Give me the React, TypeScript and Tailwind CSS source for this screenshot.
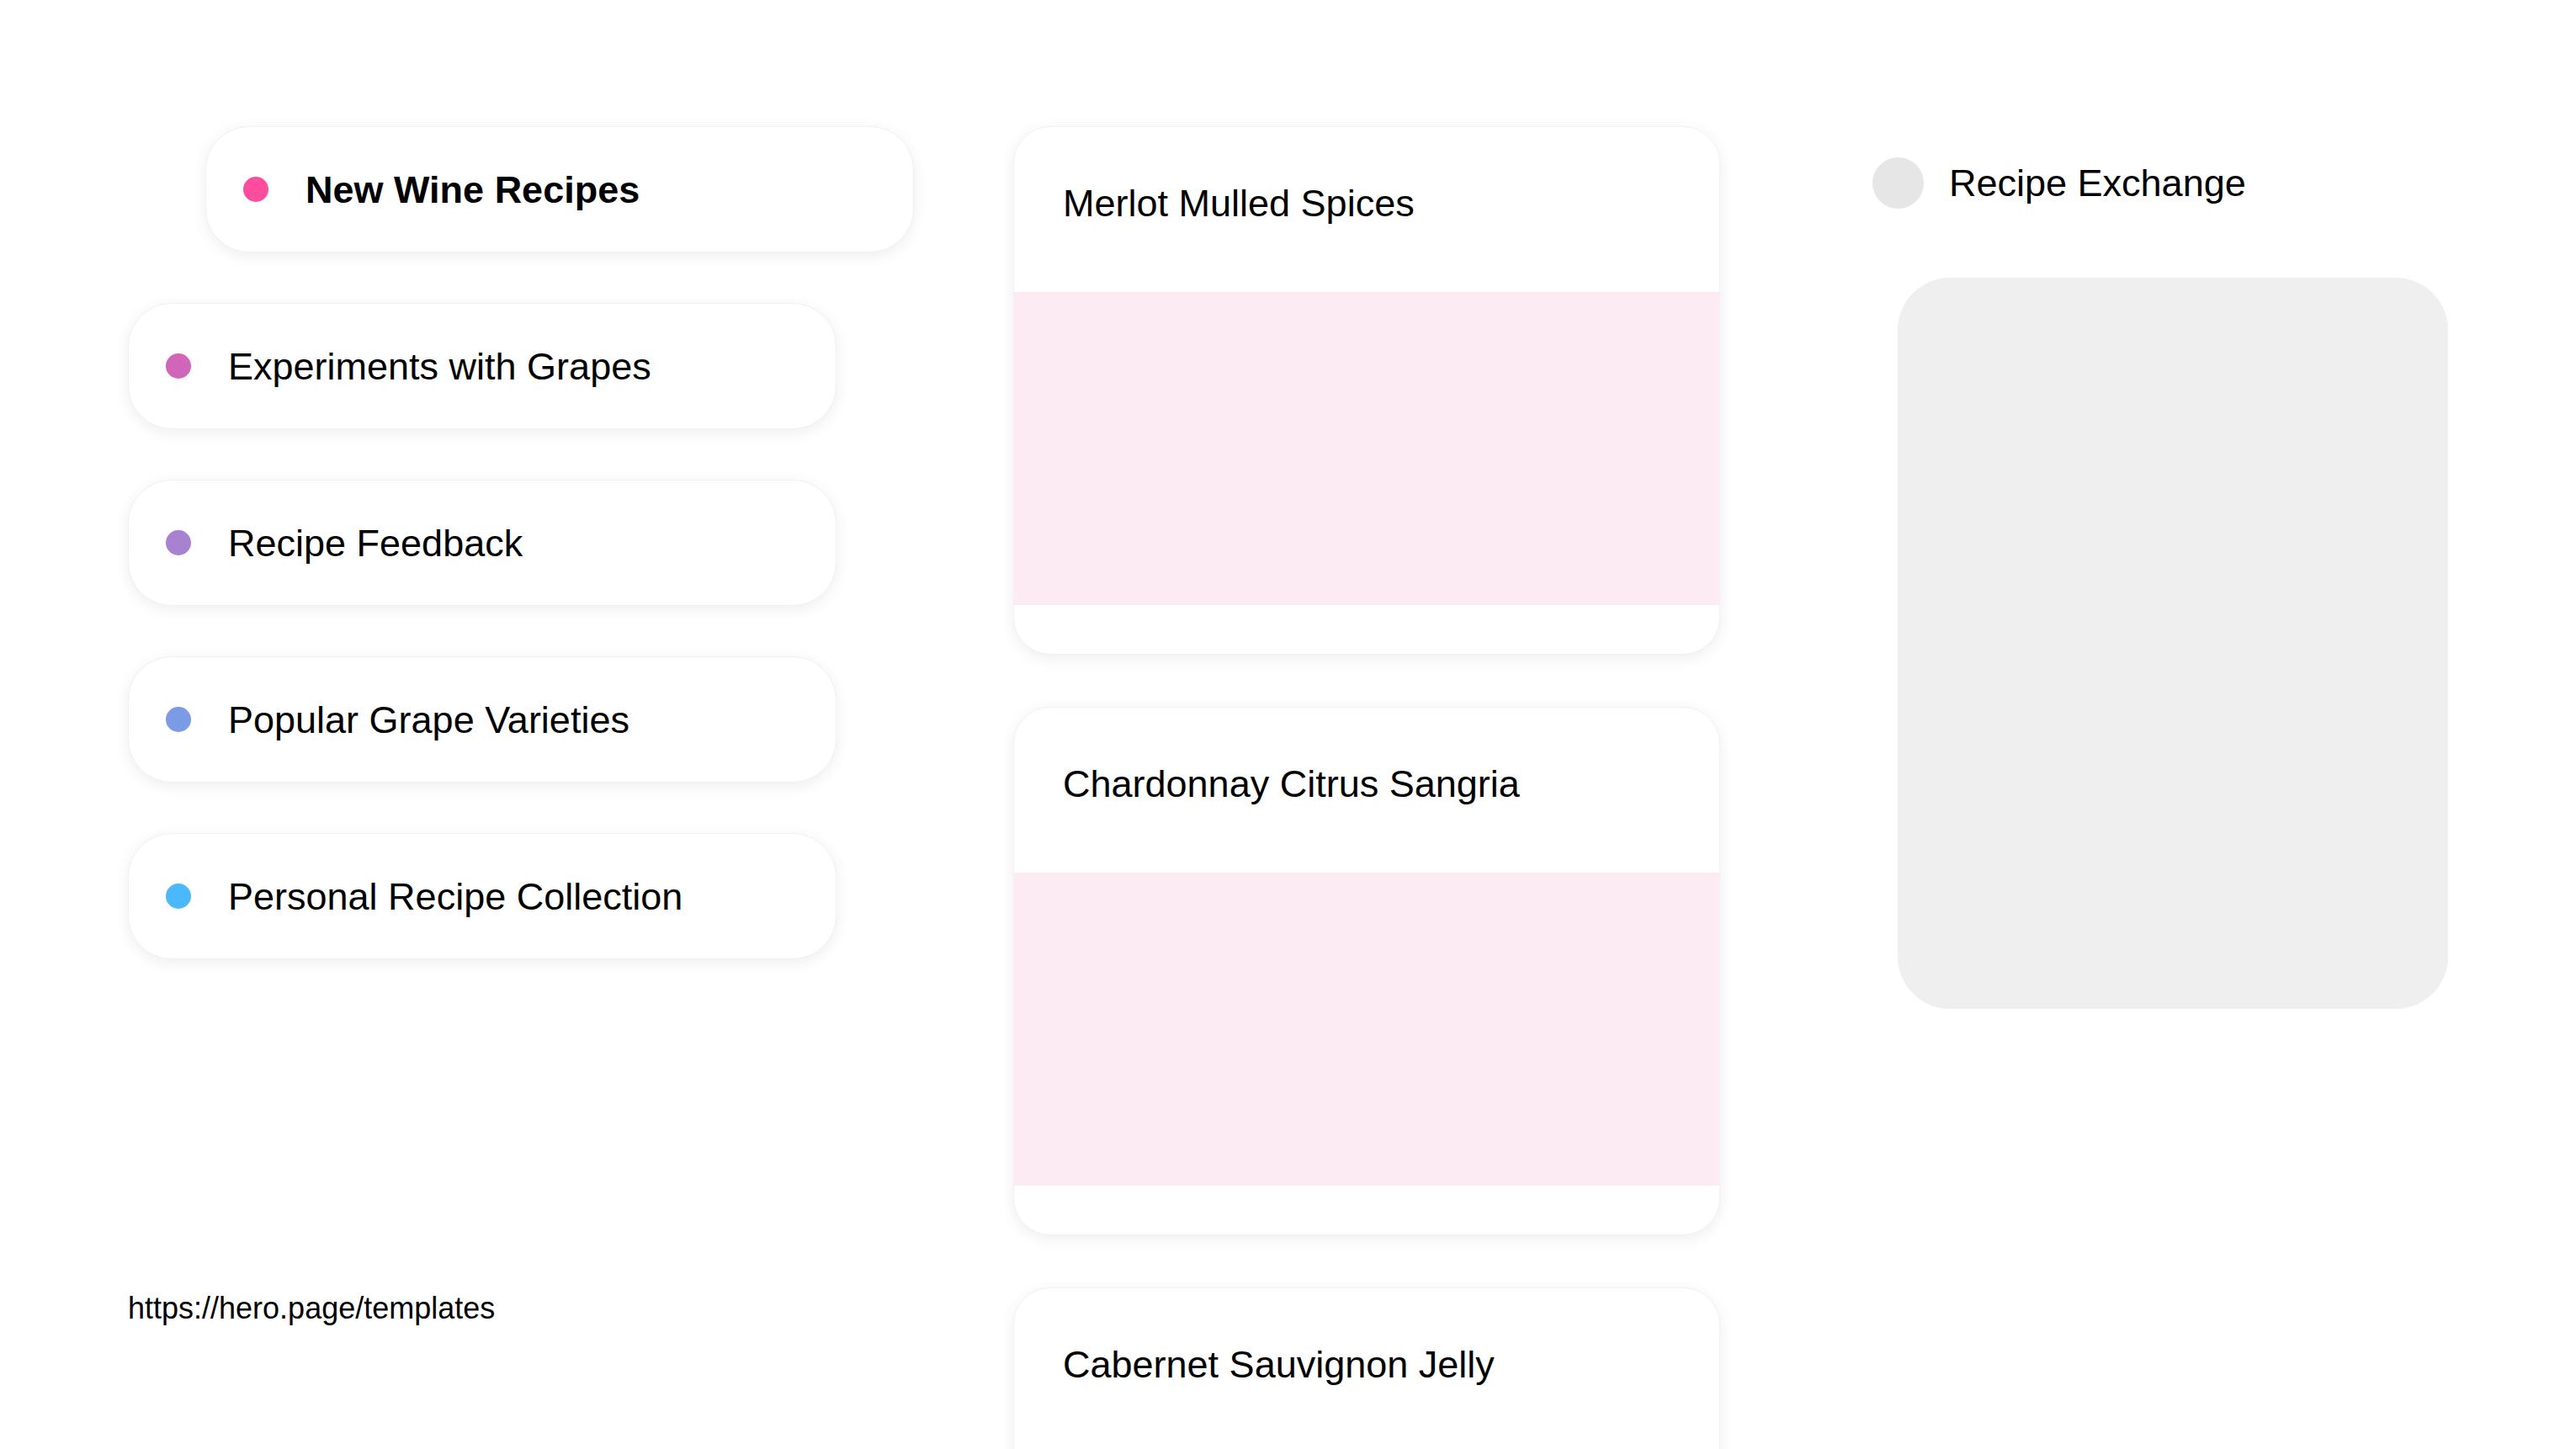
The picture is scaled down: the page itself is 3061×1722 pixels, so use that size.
const topics = [
  { label: "Experiments with Grapes", dot: "bg-[#d166b8]" },
  { label: "Recipe Feedback", dot: "bg-[#a882d0]" },
  { label: "Popular Grape Varieties", dot: "bg-[#7b9be6]" },
  { label: "Personal Recipe Collection", dot: "bg-[#4bb8fb]" },
];

const recipes = ["Merlot Mulled Spices", "Chardonnay Citrus Sangria", "Cabernet Sauvignon Jelly"];

function Pill({ label, dot, active }: { label: string; dot: string; active?: boolean }) {
  return (
    <div className="w-[842px] h-[150px] shrink-0 flex items-center gap-[44px] pl-[44px] bg-white rounded-[52px] border border-[#f1f1f1] shadow-[0_4px_18px_rgba(0,0,0,0.07)]">
      <span className={`w-[30px] h-[30px] rounded-full ${dot}`} />
      <span className={`text-[45px] leading-none text-black ${active ? "font-bold" : ""}`}>{label}</span>
    </div>
  );
}

function RecipeCard({ title }: { title: string }) {
  return (
    <div className="w-[840px] h-[628px] shrink-0 flex flex-col bg-white rounded-[44px] border border-[#f1f1f1] shadow-[0_4px_18px_rgba(0,0,0,0.07)] overflow-hidden">
      <div className="h-[196px] shrink-0 pl-[58px] pt-[68px]">
        <span className="text-[45px] leading-none text-black">{title}</span>
      </div>
      <div className="h-[372px] shrink-0 bg-[#fdebf3]" />
    </div>
  );
}

export default function App() {
  return (
    <div className="w-[3061px] h-[1722px] overflow-hidden bg-white font-['Liberation_Sans',Arial,sans-serif] flex pt-[150px] pl-[152px]">
      <div className="w-[932px] shrink-0 flex flex-col">
        <div className="flex flex-col gap-[60px]">
          <div className="ml-[92px]">
            <Pill label="New Wine Recipes" dot="bg-[#ff4d9e]" active />
          </div>
          {topics.map((t) => (
            <Pill key={t.label} label={t.label} dot={t.dot} />
          ))}
        </div>
        <a className="mt-[397px] text-[36px] leading-none text-black">https://hero.page/templates</a>
      </div>

      <div className="ml-[120px] w-[840px] shrink-0 flex flex-col gap-[62px]">
        {recipes.map((r) => (
          <RecipeCard key={r} title={r} />
        ))}
      </div>

      <div className="ml-[181px] w-[690px] shrink-0 flex flex-col pt-[37px]">
        <div className="flex items-center gap-[30px]">
          <span className="w-[61px] h-[61px] rounded-full bg-[#e6e6e6]" />
          <span className="text-[45px] leading-none text-black">Recipe Exchange</span>
        </div>
        <div className="ml-[30px] mt-[82px] w-[654px] h-[869px] rounded-[62px] bg-[#efefef]" />
      </div>
    </div>
  );
}
